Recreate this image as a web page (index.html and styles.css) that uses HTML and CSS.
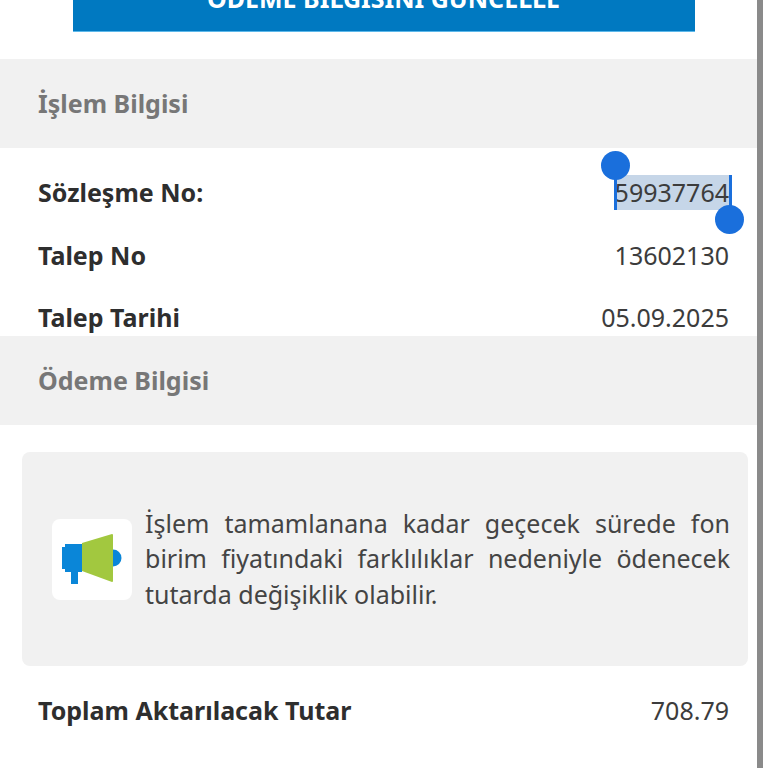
FILE: index.html
```html
<!DOCTYPE html>
<html lang="tr">
<head>
<meta charset="utf-8">
<title>İşlem Bilgisi</title>
<link rel="stylesheet" href="styles.css">
</head>
<body>
<div class="screen">
  <main class="content">
    <div class="action">
      <button class="update-btn" type="button">ÖDEME BİLGİSİNİ GÜNCELLE</button>
    </div>
    <section class="section-head"><h2>İşlem Bilgisi</h2></section>
    <div class="rows">
      <div class="row"><span class="label">Sözleşme No:</span>
        <span class="value selected">59937764
          <i class="caret caret-start"></i><i class="caret caret-end"></i>
          <i class="handle handle-start"></i><i class="handle handle-end"></i>
        </span>
      </div>
      <div class="row"><span class="label">Talep No</span><span class="value">13602130</span></div>
      <div class="row"><span class="label">Talep Tarihi</span><span class="value">05.09.2025</span></div>
    </div>
    <section class="section-head"><h2>Ödeme Bilgisi</h2></section>
    <div class="notice">
      <div class="notice-icon">
        <svg width="80" height="81" viewBox="0 0 80 81" aria-hidden="true">
          <path d="M61 30.500a8.500 8.500 0 0 1 0 17z" fill="#0a86d8"/>
          <path d="M13 25h17v28H26v12h-7V53h-6v-3h-3V28h3z" fill="#0a86d8"/>
          <path d="M30 24 L60 15 q1 0 1 1 V62 q0 1-1 1 L30 52z" fill="#a2c83f"/>
        </svg>
      </div>
      <p>İşlem tamamlanana kadar geçecek sürede fon birim fiyatındaki farklılıklar nedeniyle ödenecek tutarda değişiklik olabilir.</p>
    </div>
    <div class="row total"><span class="label">Toplam Aktarılacak Tutar</span><span class="value">708.79</span></div>
  </main>
  <div class="edge"></div>
</div>
</body>
</html>
```
FILE: styles.css
```css
* { box-sizing: border-box; }
html, body { margin: 0; padding: 0; background: #fff; }
body { font-family: "Noto Sans", "Open Sans", sans-serif; color: #333; }
.screen { display: flex; width: 768px; height: 768px; overflow: hidden; background: #fff; }
.content { width: 757px; flex: none; }
.edge { width: 6px; flex: none; background: #8a8a8a; }

.action { display: flex; justify-content: center; height: 59px; }
.update-btn {
  width: 622px; height: 52px; margin: -20px 0 0 10px; padding: 0 0 19px; border: 0; border-bottom: 1px solid #5cb8ea;
  background: #0079c1; color: #fff;
  font: 700 25px/36px "Noto Sans", sans-serif;
}

.section-head { height: 89px; background: #f1f1f1; padding: 0 0 2px 38px; display: flex; align-items: center; }
.section-head h2 { margin: 0; font-size: 25px; font-weight: 700; color: #777; line-height: 32px; }

.rows { height: 188px; padding-top: 13px; }
.row { display: flex; justify-content: space-between; align-items: center; height: 62.500px; padding: 0 28px 0 38px; font-size: 25px; line-height: 32px; }
.label { font-weight: 700; color: #2e2e2e; }
.value { font-weight: 400; color: #3c3c3c; }

.selected { position: relative; background: #c6d6e8; line-height: 35px; }
.caret { position: absolute; width: 3px; background: #1a6fdc; }
.caret-start { left: -1px; top: 0; height: 35px; }
.caret-end { right: -3px; top: 0; height: 35px; }
.handle { position: absolute; width: 29px; height: 29px; border-radius: 50%; background: #1a6fdc; }
.handle-start { left: -14px; top: -24px; }
.handle-end { right: -15px; top: 30px; }

.notice {
  display: flex; align-items: center; gap: 13px;
  height: 214px; margin: 27px 9px 0 21.500px; padding: 0 18px 0 30.500px;
  background: #f1f1f1; border-radius: 8px;
}
.notice-icon { flex: none; width: 80px; height: 81px; background: #fff; border-radius: 8px; display: flex; }
.notice p { margin: 0; font-size: 25px; line-height: 35.500px; color: #444; text-align: justify; }

.total { margin-top: 13px; }
```
